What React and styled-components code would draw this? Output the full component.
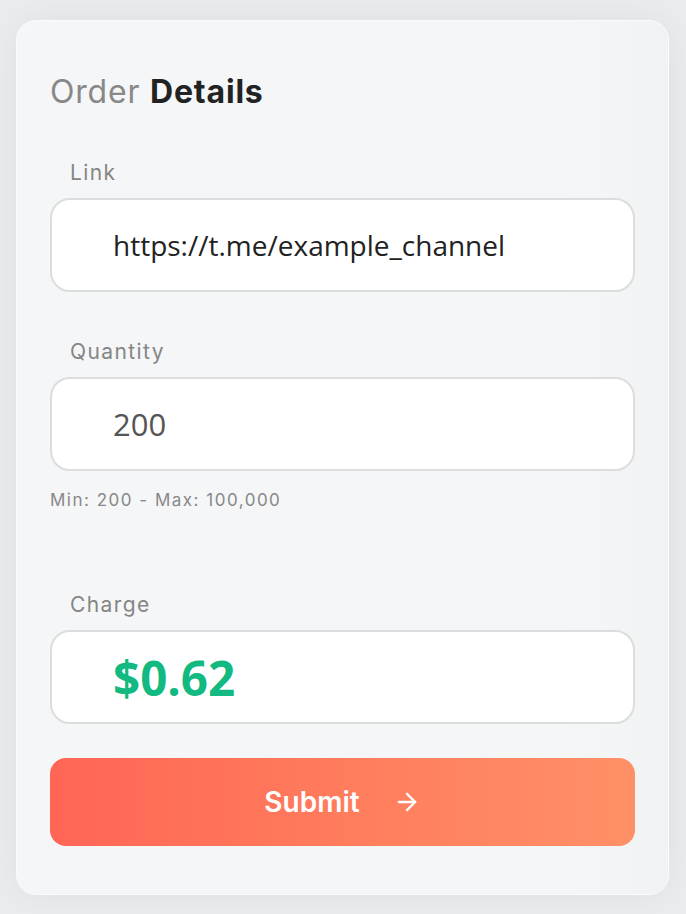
import React from 'react'
import styled, { createGlobalStyle } from 'styled-components'
import { ArrowRight } from 'lucide-react'

const GlobalStyle = createGlobalStyle`
  body {
    margin: 0;
    background: #ebeced;
    font-family: "Inter", "Noto Sans", sans-serif;
  }
`

const Page = styled.div`
  padding: 20px 17px 20px 16px;
  min-height: 914px;
  box-sizing: border-box;
`

const Card = styled.div`
  width: 653px;
  box-sizing: border-box;
  background: linear-gradient(90deg, #f5f6f7 85%, #f1f2f3 100%);
  border: 1.5px solid #fbfbfc;
  border-radius: 20px;
  box-shadow: 0 0 40px rgba(0, 0, 0, 0.06);
  padding: 54px 33px 48px 33px;
  display: flex;
  flex-direction: column;
`

const Title = styled.h2`
  margin: 0;
  font-family: "Inter", sans-serif;
  font-size: 32px;
  line-height: 34px;
  font-weight: 400;
  color: #888;
  letter-spacing: 0.8px;

  strong {
    color: #222;
    font-weight: 700;
  }
`

const Field = styled.div`
  display: flex;
  flex-direction: column;
  margin-top: ${p => p.$top}px;
`

const Label = styled.label`
  font-family: "Inter", sans-serif;
  font-size: 21px;
  line-height: 24px;
  letter-spacing: 1.4px;
  color: #858585;
  padding-left: 20px;
  margin-bottom: 13px;
`

const Box = styled.div`
  height: 94px;
  box-sizing: border-box;
  background: #fff;
  border: 2px solid #dcdddd;
  border-radius: 20px;
  display: flex;
  align-items: center;
  padding-left: 61px;
  font-family: "Open Sans", "Noto Sans", sans-serif;
  font-size: ${p => p.$size || 28}px;
  font-weight: ${p => p.$weight || 400};
  color: ${p => p.$color || '#222'};
`

const Hint = styled.div`
  margin-top: 19px;
  font-family: "Inter", sans-serif;
  font-size: 17px;
  line-height: 20px;
  letter-spacing: 1.5px;
  color: #888;
`

const SubmitButton = styled.button`
  margin-top: 34px;
  height: 88px;
  border: none;
  border-radius: 16px;
  background: linear-gradient(90deg, #ff6555 0%, #ff7a5c 45%, #ff9066 100%);
  color: #fff;
  font-family: "Inter", sans-serif;
  font-size: 28px;
  font-weight: 600;
  display: flex;
  align-items: center;
  justify-content: center;
  gap: 33px;
  cursor: pointer;
`

export default function App() {
  return (
    <Page>
      <GlobalStyle />
      <Card>
        <Title>Order <strong>Details</strong></Title>
        <Field $top={52}>
          <Label>Link</Label>
          <Box>https://t.me/example_channel</Box>
        </Field>
        <Field $top={48}>
          <Label>Quantity</Label>
          <Box $size={31} $weight={500} $color="#555">200</Box>
        </Field>
        <Hint>Min: 200 - Max: 100,000</Hint>
        <Field $top={83}>
          <Label>Charge</Label>
          <Box $size={47.5} $weight={700} $color="#12b981">$0.62</Box>
        </Field>
        <SubmitButton>
          Submit
          <ArrowRight size={28} strokeWidth={2} />
        </SubmitButton>
      </Card>
    </Page>
  )
}
